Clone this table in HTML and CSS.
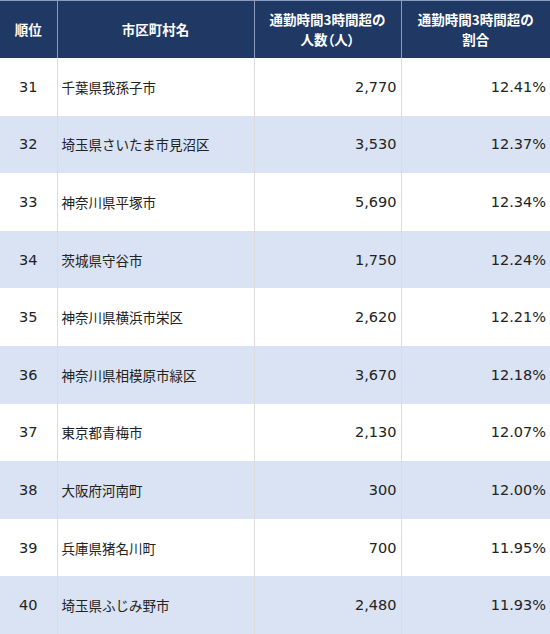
FILE: index.html
```html
<!DOCTYPE html>
<html lang="ja">
<head>
<meta charset="utf-8">
<link rel="stylesheet" href="styles.css">
</head>
<body>
<table class="rank">
  <colgroup>
    <col class="c-rank"><col class="c-name"><col class="c-num"><col class="c-pct">
  </colgroup>
  <thead>
    <tr>
      <th>順位</th>
      <th>市区町村名</th>
      <th><span class="hl">通勤時間3時間超の</span><span class="hl">人数（人）</span></th>
      <th><span class="hl">通勤時間3時間超の</span><span class="hl">割合</span></th>
    </tr>
  </thead>
  <tbody>
    <tr><td class="r">31</td><td class="n">千葉県我孫子市</td><td class="v">2,770</td><td class="v">12.41%</td></tr>
    <tr class="alt"><td class="r">32</td><td class="n">埼玉県さいたま市見沼区</td><td class="v">3,530</td><td class="v">12.37%</td></tr>
    <tr><td class="r">33</td><td class="n">神奈川県平塚市</td><td class="v">5,690</td><td class="v">12.34%</td></tr>
    <tr class="alt"><td class="r">34</td><td class="n">茨城県守谷市</td><td class="v">1,750</td><td class="v">12.24%</td></tr>
    <tr><td class="r">35</td><td class="n">神奈川県横浜市栄区</td><td class="v">2,620</td><td class="v">12.21%</td></tr>
    <tr class="alt"><td class="r">36</td><td class="n">神奈川県相模原市緑区</td><td class="v">3,670</td><td class="v">12.18%</td></tr>
    <tr><td class="r">37</td><td class="n">東京都青梅市</td><td class="v">2,130</td><td class="v">12.07%</td></tr>
    <tr class="alt"><td class="r">38</td><td class="n">大阪府河南町</td><td class="v">300</td><td class="v">12.00%</td></tr>
    <tr><td class="r">39</td><td class="n">兵庫県猪名川町</td><td class="v">700</td><td class="v">11.95%</td></tr>
    <tr class="alt"><td class="r">40</td><td class="n">埼玉県ふじみ野市</td><td class="v">2,480</td><td class="v">11.93%</td></tr>
  </tbody>
</table>
</body>
</html>
```

FILE: styles.css
```css
html, body {
  margin: 0;
  padding: 0;
  background: #ffffff;
}
body {
  font-family: "Noto Sans CJK JP", "Noto Sans", sans-serif;
  color: #222222;
  font-size: 13.5px;
}
.rank {
  width: 550px;
  border-collapse: collapse;
  table-layout: fixed;
}
.c-rank { width: 57px; }
.c-name { width: 197px; }
.c-num { width: 147px; }
.c-pct { width: 149px; }

.rank th {
  height: 57px;
  background: #203864;
  color: #ffffff;
  font-weight: 700;
  line-height: 19.5px;
  text-align: center;
  vertical-align: middle;
  padding: 0 2px;
  font-feature-settings: "palt";
  border-top: 1px solid #8a9bbd;
  border-left: 1px solid #8a9bbd;
  border-right: 1px solid #8a9bbd;
}
.rank th:first-child { border-left: none; }
.rank th:last-child { border-right: none; }
.hl { display: block; }

.rank td {
  height: 57.6px;
  padding: 0 4px;
  vertical-align: middle;
  border-left: 1px solid #dcdcdc;
  border-right: 1px solid #dcdcdc;
  line-height: 20px;
}
.rank td:first-child { border-left: none; }
.rank td:last-child { border-right: none; }
.rank tr.alt td { background: #dae3f3; }

.r {
  text-align: center;
  font-family: "DejaVu Sans", "Noto Sans CJK JP", sans-serif;
  font-size: 14.5px;
  padding-top: 2px;
}
.n {
  text-align: left;
  padding-top: 1px;
}
.v {
  text-align: right;
  font-family: "DejaVu Sans", "Noto Sans CJK JP", sans-serif;
  font-size: 14.5px;
  padding-top: 2px;
}
```
